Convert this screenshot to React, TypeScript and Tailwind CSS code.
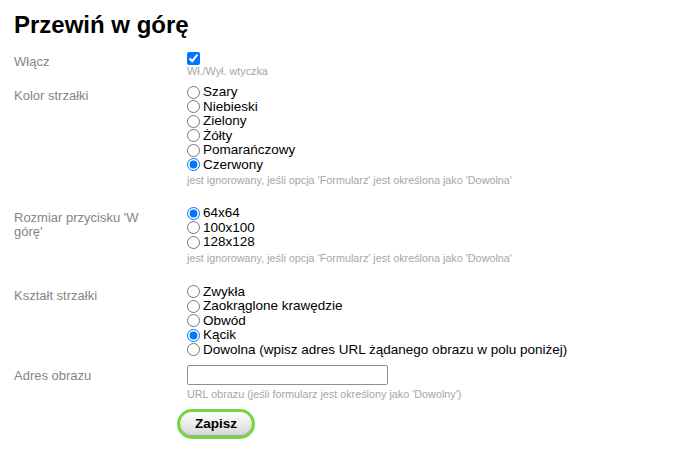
import { useState } from "react";

const colors = ["Szary", "Niebieski", "Zielony", "Żółty", "Pomarańczowy", "Czerwony"];
const sizes = ["64x64", "100x100", "128x128"];
const shapes = [
  "Zwykła",
  "Zaokrąglone krawędzie",
  "Obwód",
  "Kącik",
  "Dowolna (wpisz adres URL żądanego obrazu w polu poniżej)",
];

const HINT_FORM = "jest ignorowany, jeśli opcja 'Formularz' jest określona jako 'Dowolna'";

function Row({ label, labelPad, children }: { label: string; labelPad: string; children: React.ReactNode }) {
  return (
    <div className="flex">
      <div className={`w-[173px] shrink-0 ${labelPad}`}>
        <div className="w-[145px] text-[13px] leading-[13.5px] text-[#858585]">{label}</div>
      </div>
      <div className="flex flex-col">{children}</div>
    </div>
  );
}

function Hint({ children, className = "" }: { children: React.ReactNode; className?: string }) {
  return <div className={`text-[10.8px] leading-[13px] text-[#a6a6a6] ${className}`}>{children}</div>;
}

function RadioGroup({
  name,
  options,
  value,
  onChange,
}: {
  name: string;
  options: string[];
  value: string;
  onChange: (v: string) => void;
}) {
  return (
    <div className="flex flex-col">
      {options.map((o) => (
        <label key={o} className="flex h-[14.5px] items-center gap-[3px] text-[13.5px] leading-[14px] text-black">
          <input
            type="radio"
            name={name}
            checked={value === o}
            onChange={() => onChange(o)}
            className="m-0 h-[13px] w-[13px]"
          />
          <span>{o}</span>
        </label>
      ))}
    </div>
  );
}

export default function App() {
  const [enabled, setEnabled] = useState(true);
  const [color, setColor] = useState("Czerwony");
  const [size, setSize] = useState("64x64");
  const [shape, setShape] = useState("Kącik");
  const [url, setUrl] = useState("");

  return (
    <div className="min-h-[450px] bg-white pl-[14px] pt-[11px] font-['Liberation_Sans',Arial,sans-serif]">
      <h1 className="text-[24px] font-bold leading-[28px] text-black">Przewiń w górę</h1>

      <div className="mt-[13px]">
        <Row label="Włącz" labelPad="pt-[3px]">
          <input
            type="checkbox"
            checked={enabled}
            onChange={(e) => setEnabled(e.target.checked)}
            className="m-0 h-[13px] w-[13px]"
          />
          <Hint>Wł./Wył. wtyczka</Hint>
        </Row>
      </div>

      <div className="mt-[7px]">
        <Row label="Kolor strzałki" labelPad="pt-[4px]">
          <RadioGroup name="color" options={colors} value={color} onChange={setColor} />
          <Hint className="mt-[2px]">{HINT_FORM}</Hint>
        </Row>
      </div>

      <div className="mt-[19px]">
        <Row label="Rozmiar przycisku 'W górę'" labelPad="pt-[5px]">
          <RadioGroup name="size" options={sizes} value={size} onChange={setSize} />
          <Hint className="mt-[2px]">{HINT_FORM}</Hint>
        </Row>
      </div>

      <div className="mt-[20px]">
        <Row label="Kształt strzałki" labelPad="pt-[4px]">
          <RadioGroup name="shape" options={shapes} value={shape} onChange={setShape} />
        </Row>
      </div>

      <div className="mt-[8px]">
        <Row label="Adres obrazu" labelPad="pt-[4px]">
          <input
            type="text"
            value={url}
            onChange={(e) => setUrl(e.target.value)}
            className="h-[20px] w-[201px] rounded-[2px] border border-[#8f8f8f] bg-white px-1 text-[13px] outline-none"
          />
          <Hint className="mt-[3px]">URL obrazu (jeśli formularz jest określony jako 'Dowolny')</Hint>
        </Row>
      </div>

      <div className="mt-[8px] pl-[163px]">
        <button
          type="button"
          className="h-[30px] w-[78px] rounded-full border-[3px] border-[#78d542] bg-linear-to-b from-white to-[#d6d6d6] text-[13.5px] font-bold text-black shadow-[inset_0_-1px_1px_rgba(0,0,0,0.25)]"
        >
          Zapisz
        </button>
      </div>
    </div>
  );
}
